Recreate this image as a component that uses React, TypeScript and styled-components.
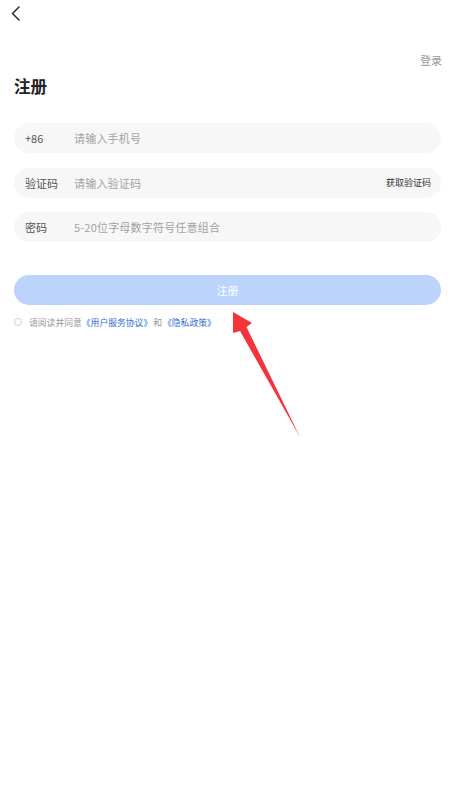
import React from "react";
import styled, { createGlobalStyle } from "styled-components";

const Global = createGlobalStyle`
  html, body { margin: 0; padding: 0; background: #ffffff; }
  body { font-family: "Noto Sans CJK SC", "Noto Sans", sans-serif; }
  * { box-sizing: border-box; }
`;

const Page = styled.div`
  position: relative;
  width: 455px;
  height: 789px;
  background: #fff;
  overflow: hidden;
`;

const TopBar = styled.div`
  height: 27px;
  padding-left: 10px;
  display: flex;
  align-items: flex-start;
  padding-top: 5px;
`;

const LoginRow = styled.div`
  display: flex;
  justify-content: flex-end;
  padding: 0 13px;
  margin-top: 25px;
`;

const LoginLink = styled.span`
  font-size: 11px;
  line-height: 16px;
  color: #9a9a9a;
`;

const Title = styled.h1`
  margin: 7px 0 0;
  padding-left: 14px;
  font-size: 16.5px;
  line-height: 22px;
  font-weight: 700;
  color: #222;
`;

const Form = styled.div`
  margin-top: 26px;
  padding: 0 14px 0 14px;
  display: flex;
  flex-direction: column;
  gap: 14.5px;
`;

const Field = styled.div`
  height: 30px;
  border-radius: 15px;
  background: #f7f7f7;
  display: flex;
  align-items: center;
  padding: 0 10px 0 11px;
`;

const Label = styled.span`
  width: 49px;
  flex: none;
  font-size: 11px;
  color: #555;
`;

const Input = styled.input`
  flex: 1;
  min-width: 0;
  border: none;
  outline: none;
  background: transparent;
  font-family: inherit;
  font-size: 11px;
  color: #333;
  padding: 0;
  letter-spacing: 0.2px;
  &::placeholder { color: #a2a2a2; }
`;

const CodeButton = styled.span`
  font-size: 9px;
  color: #333;
  flex: none;
`;

const Submit = styled.button`
  margin: 33px 14px 0 14px;
  width: calc(100% - 28px);
  height: 30px;
  border: none;
  border-radius: 15px;
  background: #bcd3fb;
  color: #fff;
  font-family: inherit;
  font-size: 11px;
  display: block;
`;

const Agree = styled.div`
  margin-top: 11px;
  padding-left: 14px;
  display: flex;
  align-items: center;
  height: 12px;
  font-size: 8.8px;
  color: #999;
`;

const Circle = styled.span`
  width: 8px;
  height: 8px;
  border-radius: 50%;
  border: 1px solid #cfcfcf;
  margin-right: 7px;
  flex: none;
`;

const DocLink = styled.span`
  color: #2f6fd8;
`;

const Gap = styled.span`
  margin: 0 1px;
`;

const Overlay = styled.svg`
  position: absolute;
  left: 0;
  top: 0;
  pointer-events: none;
`;

export default function App() {
  return (
    <>
      <Global />
      <Page>
        <TopBar>
          <svg width="12" height="18" viewBox="0 0 12 18">
            <path d="M9 2 L2.5 8.5 L9 15" fill="none" stroke="#333" strokeWidth="1.6" strokeLinecap="round" strokeLinejoin="round" />
          </svg>
        </TopBar>
        <LoginRow>
          <LoginLink>登录</LoginLink>
        </LoginRow>
        <Title>注册</Title>
        <Form>
          <Field>
            <Label>+86</Label>
            <Input placeholder="请输入手机号" />
          </Field>
          <Field>
            <Label>验证码</Label>
            <Input placeholder="请输入验证码" />
            <CodeButton>获取验证码</CodeButton>
          </Field>
          <Field>
            <Label>密码</Label>
            <Input placeholder="5-20位字母数字符号任意组合" />
          </Field>
        </Form>
        <Submit>注册</Submit>
        <Agree>
          <Circle />
          请阅读并同意<DocLink>《用户服务协议》</DocLink>
          <Gap>和</Gap>
          <DocLink>《隐私政策》</DocLink>
        </Agree>
        <Overlay width="455" height="789" viewBox="0 0 455 789">
          <polygon
            points="233,312 252,323 246.5,327 300,437 240,331 233,333"
            fill="#f5333a"
          />
        </Overlay>
      </Page>
    </>
  );
}
